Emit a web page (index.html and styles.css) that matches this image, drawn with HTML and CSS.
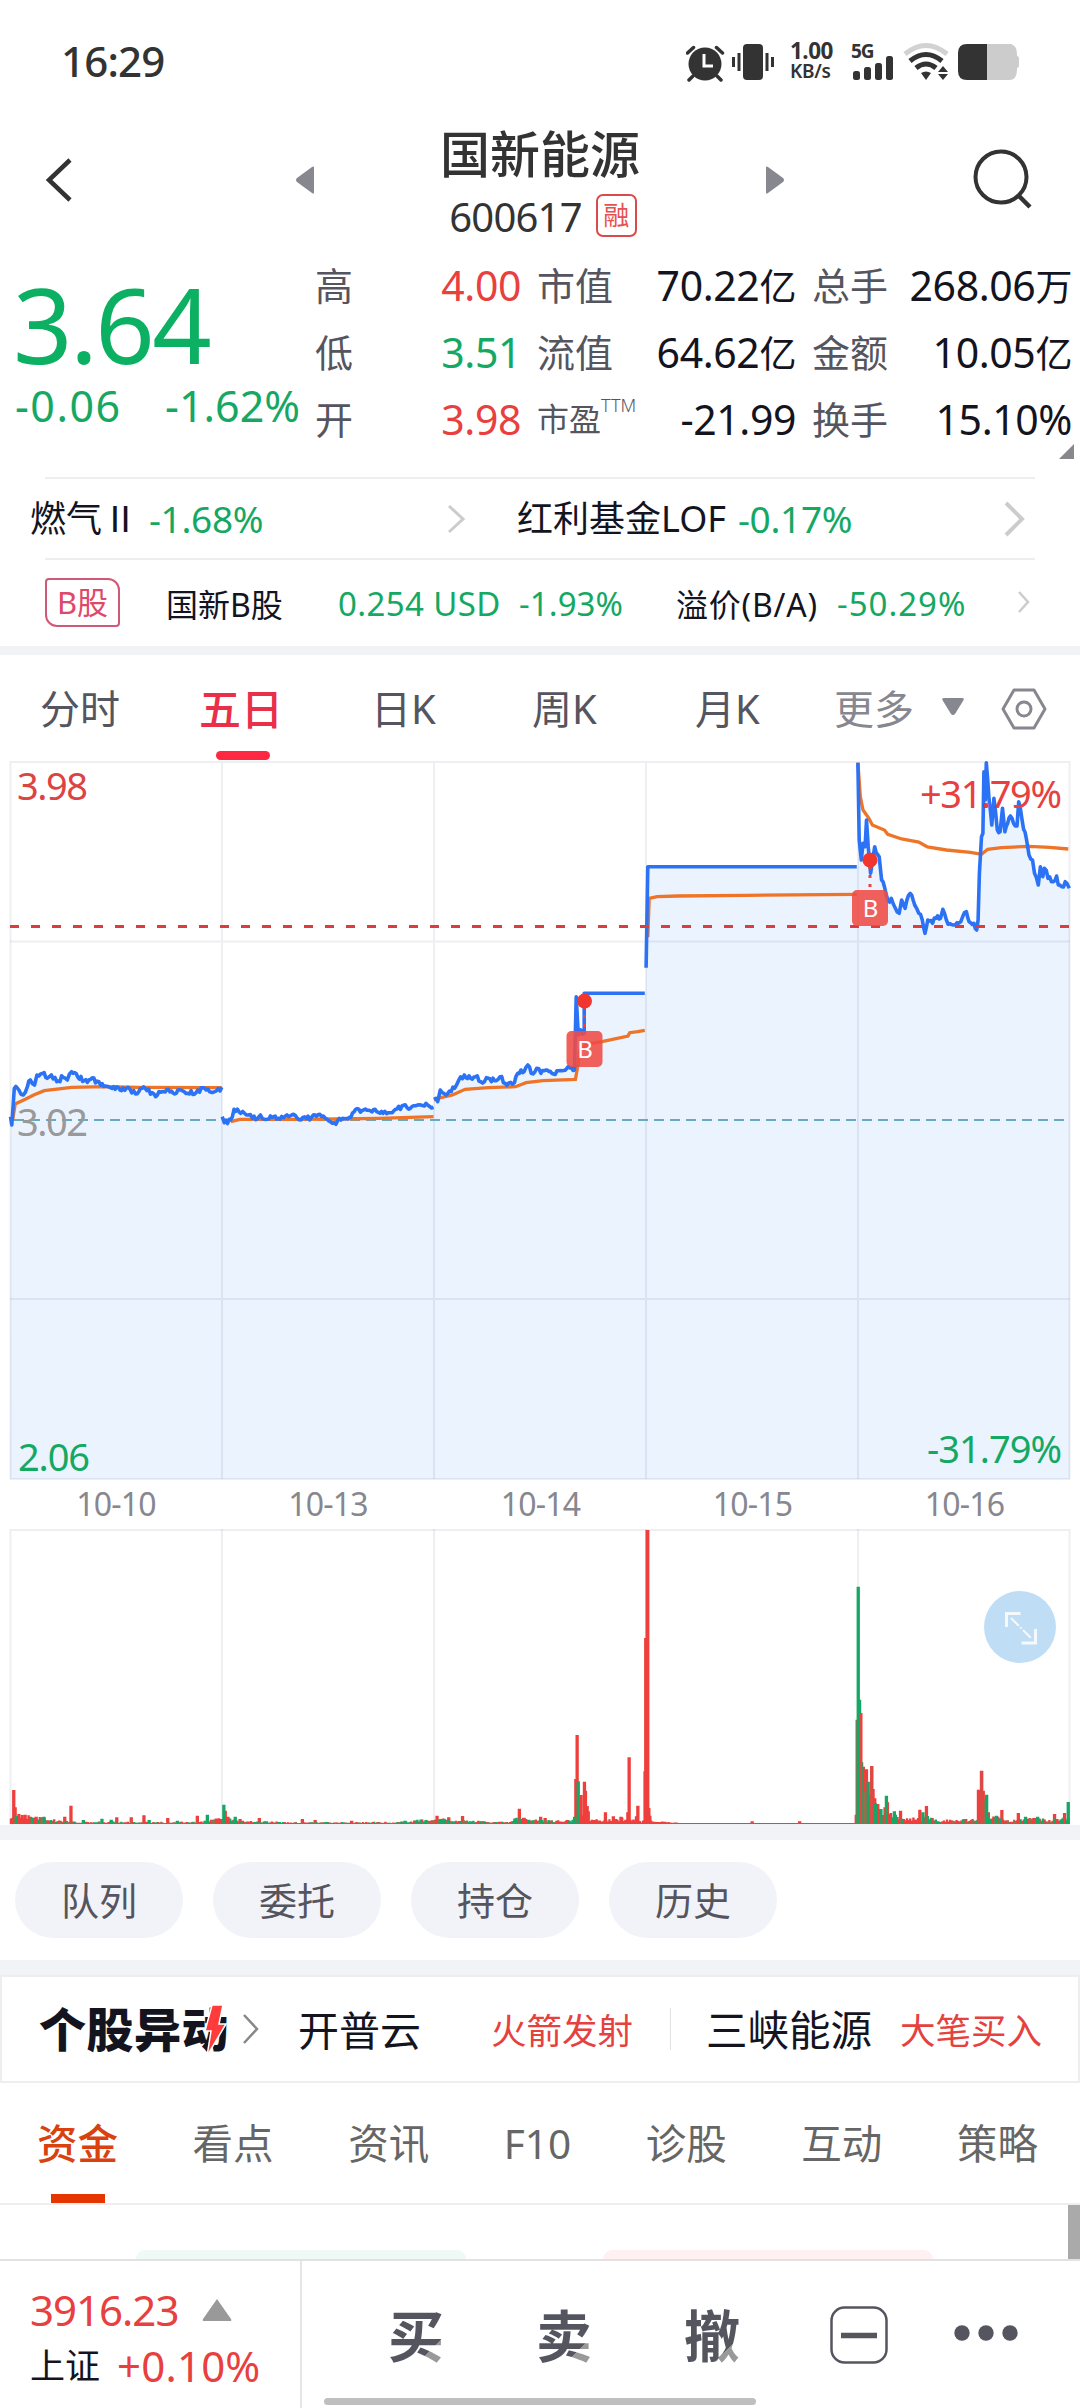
FILE: index.html
```html
<!DOCTYPE html>
<html lang="zh-CN">
<head>
<meta charset="utf-8">
<title>国新能源 600617</title>
<link rel="stylesheet" href="styles.css">
</head>
<body>
<div class="app">
  <div class="status">
    <span class="clock">16:29</span>
    <svg class="sys" width="116" height="40" viewBox="0 0 116 40">
      <g fill="#333" stroke="#333">
        <circle cx="19" cy="22" r="16.5" stroke="none"/>
        <path d="M1.500 11l6-5.500M36.500 11l-6-5.500M7 34l-4 4M31 34l4 4" stroke-width="3.500" stroke-linecap="round"/>
        <path d="M18 12v12h9" fill="none" stroke="#fff" stroke-width="3"/>
        <rect x="57" y="2" width="20" height="36" rx="4" stroke="none"/>
        <path d="M53 11v18M81 11v18" stroke-width="3"/><path d="M47.500 15v10M86.500 15v10" stroke-width="3"/>
      </g>
    </svg>
    <span class="net"><b>1.00</b><b class="kb">KB/s</b></span>
    <svg class="sys2" width="190" height="40" viewBox="0 0 190 40">
      <g fill="#333">
        <text x="0" y="15.500" class="fiveg">5G</text>
        <rect x="2" y="29" width="7" height="9" rx="2.500"/><rect x="13" y="25" width="7" height="13" rx="2.500"/><rect x="24" y="21" width="7" height="17" rx="2.500"/><rect x="35" y="14" width="7" height="24" rx="2.500"/>
        <path d="M54 12q21-17 42 0" fill="none" stroke="#d2d2d2" stroke-width="5"/>
        <path d="M59 19q16-13 32 0M65 26q10-8 20 0" fill="none" stroke="#333" stroke-width="5"/>
        <path d="M70 31q5-3 10 0l-5 7zM87 30l5-6 5 6zM87 32h10l-5 6z"/>
        <path d="M158 2h2q6 2 6 10v2q2 0 2 3v6q0 3-2 3v2q0 10-8 10h-24V2z" fill="#ccc"/>
        <path d="M136 2v36h-20q-9 0-9-9V11q0-9 9-9z"/>
      </g>
    </svg>
  </div>

  <header class="head">
    <svg class="back" width="30" height="48" viewBox="0 0 30 48"><path d="M26 4L5 24l21 20" fill="none" stroke="#333" stroke-width="4.500"/></svg>
    <svg class="prev" width="20" height="30" viewBox="0 0 20 30"><path d="M19 2v26q0 1-2 0L2 17q-2-2 0-4L17 2q2-1 2 0z" fill="#87878f"/></svg>
    <div class="title"><h1>国新能源</h1><div class="code"><span>600617</span><i>融</i></div></div>
    <svg class="next" width="20" height="30" viewBox="0 0 20 30"><path d="M1 2v26q0 1 2 0l15-11q2-2 0-4L3 2Q1 1 1 2z" fill="#87878f"/></svg>
    <svg class="search" width="62" height="62" viewBox="0 0 62 62"><circle cx="29" cy="29" r="25.500" fill="none" stroke="#333" stroke-width="4"/><path d="M46 47l12 12" stroke="#333" stroke-width="4.500"/></svg>
  </header>

  <section class="quote">
    <div class="last"><div class="price">3.64</div><div class="chg"><span class="abs">-0.06</span><span>-1.62%</span></div></div>
    <dl class="stats">
      <dt>高</dt><dd class="up">4.00</dd><dt>市值</dt><dd>70.22<em>亿</em></dd><dt>总手</dt><dd>268.06<em>万</em></dd>
      <dt>低</dt><dd class="down">3.51</dd><dt>流值</dt><dd>64.62<em>亿</em></dd><dt>金额</dt><dd>10.05<em>亿</em></dd>
      <dt>开</dt><dd class="up">3.98</dd><dt class="pe">市盈<sup>TTM</sup></dt><dd>-21.99</dd><dt>换手</dt><dd>15.10%</dd>
    </dl>
    <i class="corner"></i>
  </section>

  <section class="related">
    <span class="r1">燃气 Ⅱ</span><span class="down">-1.68%</span>
    <svg width="22" height="34" viewBox="0 0 22 34"><path d="M3 4l14 13L3 30" fill="none" stroke="#ccc" stroke-width="3"/></svg>
    <span class="r2">红利基金LOF</span><span class="down">-0.17%</span>
    <svg class="far" width="24" height="38" viewBox="0 0 24 38"><path d="M3 3l16 16L3 35" fill="none" stroke="#ccc" stroke-width="4"/></svg>
  </section>
  <section class="bshare">
    <i>B股</i><span class="b1">国新B股</span><span class="b2 down">0.254 USD</span><span class="b3 down">-1.93%</span><span class="b4">溢价(B/A)</span><span class="b5 down">-50.29%</span>
    <svg width="16" height="26" viewBox="0 0 16 26"><path d="M3 3l9 10-9 10" fill="none" stroke="#ccc" stroke-width="2.500"/></svg>
  </section>
  <div class="band thin"></div>

  <nav class="periods">
    <span>分时</span><span class="on">五日</span><span>日K</span><span>周K</span><span>月K</span><span class="more">更多</span>
    <svg class="tri" width="24" height="20" viewBox="0 0 24 20"><path d="M3 1h18q3 0 1 3l-8 13q-2 2-4 0L2 4Q0 1 3 1z" fill="#87878f"/></svg>
    <svg class="hex" width="48" height="44" viewBox="0 0 48 44"><path d="M14 3h20l11 19-11 19H14L3 22z" fill="none" stroke="#87878f" stroke-width="3" stroke-linejoin="round"/><circle cx="24" cy="22" r="7" fill="none" stroke="#87878f" stroke-width="3"/></svg>
  </nav>

  <svg class="chart" id="chart" width="1080" height="1065" viewBox="0 760 1080 1065">
    <g id="areas" fill="#ebf3ff"></g>
    <g fill="none" stroke="#1c2a4a" stroke-opacity=".075" stroke-width="2">
      <rect x="10.500" y="762" width="1059" height="717"/>
      <path d="M222 763v716M434 763v716M646 763v716M858 763v716M10 941.500h1060M10 1299h1060"/>
      <rect x="10.500" y="1530" width="1059" height="294"/>
      <path d="M222 1529v295M434 1529v295M646 1529v295M858 1529v295"/>
    </g>
    <path d="M14 1120h1056" stroke="#67a9be" stroke-width="2" stroke-dasharray="10 6"/>
    <g class="axis"><text x="17" y="1136" textLength="71" fill="#999">3.02</text></g>
    <g id="averages" fill="none" stroke="#ee7427" stroke-width="3.300"></g>
    <g id="prices" fill="none" stroke="#2b72f5" stroke-width="3.600" stroke-linejoin="round"></g>
    <path d="M10 926.500h1060" stroke="#dc3c3c" stroke-width="3.200" stroke-dasharray="9 12"/>
    <path d="M584.500 1006v25M870 866v24" stroke="#e8453f" stroke-width="3" stroke-dasharray="3 6"/>
    <g fill="#f0362f"><circle cx="584.500" cy="1001" r="7.500"/><circle cx="870" cy="860" r="7.500"/></g>
    <g fill="#ef4b46" fill-opacity=".88"><rect x="566.500" y="1031" width="36" height="36" rx="5"/><rect x="852" y="890" width="36" height="36" rx="5"/></g>
    <g class="mark"><text x="585" y="1058">B</text><text x="870.500" y="917">B</text></g>
    <g class="axis">
      <text x="17" y="800" textLength="71" fill="#dc4443">3.98</text>
      <text x="920" y="808" textLength="142" fill="#e8403f">+31.79%</text>
      <text x="18" y="1471" textLength="72" fill="#14a863">2.06</text>
      <text x="927" y="1463" textLength="135" fill="#14a863">-31.79%</text>
    </g>
    <g class="dates"><text x="116" y="1516">10-10</text><text x="328" y="1516">10-13</text><text x="540.500" y="1516">10-14</text><text x="752.500" y="1516">10-15</text><text x="964.500" y="1516">10-16</text></g>
    <g id="volumes"></g>
    <circle cx="1020" cy="1627" r="36" fill="#c0ddf6"/>
    <path d="M1006.500 1627v-13.500h14M1035.500 1629v14h-14" fill="none" stroke="#f4f9fe" stroke-width="3"/>
    <path d="M1011 1618l20 20" stroke="#f4f9fe" stroke-width="2" stroke-dasharray="11 2 2 2"/>
  </svg>
  <div class="band"></div>

  <div class="chips"><span>队列</span><span>委托</span><span>持仓</span><span>历史</span></div>
  <div class="band"></div>

  <section class="moves">
    <div class="logo">个股异动<svg width="24" height="54" viewBox="0 0 24 54"><path d="M8 2h11l-4 19h7L3 53l4-25H1z" fill="#ff3b3b" stroke="#fff" stroke-width="1.500"/></svg></div>
    <svg width="18" height="34" viewBox="0 0 18 34"><path d="M2 3l13 14L2 31" fill="none" stroke="#888" stroke-width="2.500"/></svg>
    <span class="m1">开普云</span><span class="m2">火箭发射</span><i></i><span class="m3">三峡能源</span><span class="m4">大笔买入</span>
  </section>

  <nav class="tabs"><span class="on">资金</span><span>看点</span><span>资讯</span><span>F10</span><span>诊股</span><span>互动</span><span>策略</span></nav>
  <div class="peek"><i class="g"></i><i class="p"></i><i class="bar"></i></div>

  <footer class="foot">
    <div class="index">
      <div class="i1"><span>3916.23</span><svg width="30" height="22" viewBox="0 0 30 22"><path d="M15 0l14 20q1 2-1 2H2q-2 0-1-2z" fill="#999"/></svg></div>
      <div class="i2"><span>上证</span><b>+0.10%</b></div>
    </div>
    <div class="acts">
      <span>买</span><span>卖</span><span class="c">撤</span>
      <svg width="60" height="60" viewBox="0 0 60 60"><rect x="2.500" y="2.500" width="55" height="55" rx="13" fill="none" stroke="#555560" stroke-width="2.500"/><path d="M12 30.500h36" stroke="#555560" stroke-width="5.500"/></svg>
      <svg class="dots" width="66" height="18" viewBox="0 0 66 18"><g fill="#555560"><circle cx="9" cy="9" r="7.700"/><circle cx="33" cy="9" r="7.700"/><circle cx="57" cy="9" r="7.700"/></g></svg>
      <i class="home"></i>
    </div>
  </footer>
</div>
<script src="chart.js"></script>
</body>
</html>
```
FILE: styles.css
```css
* { box-sizing: border-box; margin: 0; padding: 0; }
body { width: 1080px; background: #fff; color: #14141f; font-family: "Noto Sans", "Noto Sans CJK SC", sans-serif; font-size: 40px; white-space: nowrap; }
i, em { font-style: normal; }
svg { display: block; flex: none; }
span { flex: none; }
.app { width: 1080px; height: 2408px; display: flex; flex-direction: column; overflow: hidden; }
.app > * { flex: none; }
.up { color: #e8403f; }
.down { color: #14a863; }

.status { height: 110px; padding: 42px 0 0 61px; display: flex; align-items: flex-start; color: #333; }
.clock { width: 625px; font-size: 42px; line-height: 38px; font-weight: 500; letter-spacing: -.8px; }
.net { width: 61px; margin-left: -12px; display: flex; flex-direction: column; font-size: 22.500px; line-height: 18px; letter-spacing: -.5px; }
.net b { font-weight: 700; }
.net .kb { font-size: 19px; font-weight: 600; line-height: 22px; letter-spacing: -.3px; }
.sys2 { overflow: visible; }
.fiveg { font-size: 19px; font-weight: 700; letter-spacing: -1px; }

.head { height: 140px; padding-left: 44px; display: flex; align-items: flex-start; }
.back { margin-top: 46px; }
.prev { margin: 55px 0 0 221px; }
.title { width: 450px; display: flex; flex-direction: column; align-items: center; padding-top: 17px; }
.title h1 { font-size: 50px; line-height: 54px; font-weight: 500; color: #333; }
.code { display: flex; align-items: center; gap: 14px; height: 44px; margin-top: 12px; font-size: 40px; letter-spacing: -.8px; color: #333; padding-left: 6px; }
.code span { line-height: 44px; padding-top: 3px; }
.code i { width: 41px; height: 43px; border: 2px solid #d94a4a; border-radius: 7px; color: #e8504f; font-size: 26px; line-height: 38px; text-align: center; letter-spacing: 0; }
.next { margin: 55px 0 0 0; }
.search { margin: 38px 0 0 187px; }

.quote { height: 227px; position: relative; display: flex; }
.last { width: 315px; padding-left: 13px; color: #0cb062; }
.price { font-size: 104px; line-height: 96px; height: 130px; padding-top: 26px; letter-spacing: -2.500px; }
.chg { display: flex; justify-content: space-between; font-size: 43px; line-height: 50px; height: 50px; padding: 1px 15px 0 2px; color: #14a863; }
.abs { letter-spacing: 1.500px; }
.stats { width: 760px; display: grid; grid-template-columns: 64px 142px 90px 185px 107px 169px; grid-template-rows: 67px 67px 67px; padding-top: 2px; }
.stats dt { font-size: 38px; line-height: 66px; color: #555560; }
.stats dt:nth-of-type(3n+2), .stats dt:nth-of-type(3n) { padding-left: 16px; }
.stats dd { text-align: right; font-size: 41px; line-height: 66px; letter-spacing: -.4px; }
.stats em { font-size: 37px; }
.stats .pe { font-size: 32px; }
.pe sup { font-size: 18px; line-height: 0; vertical-align: 19px; font-weight: 300; }
.corner { position: absolute; right: 6px; bottom: 18px; width: 15px; height: 15px; background: #88888c; clip-path: polygon(100% 0, 100% 100%, 0 100%); }

.related { height: 83px; margin: 0 45px; border-top: 2px solid #eee; border-bottom: 2px solid #eee; display: flex; align-items: center; font-size: 37px; line-height: 76px; }
.related .down { letter-spacing: -.3px; width: 297px; }
.related .r1 { margin-left: -15px; width: 119px; font-size: 36px; word-spacing: -9px; }
.related .r2 { margin-left: 49px; font-size: 36px; width: 221px; }
.related .r2 + .down { width: 265px; }
.bshare { height: 86px; padding: 0 0 2px 45px; display: flex; align-items: center; font-size: 33px; }
.bshare span { padding-top: 2px; }
.bshare i { width: 75px; height: 49px; border: 2px solid #d05878; border-radius: 4px 12px 4px 12px; color: #e0486a; font-size: 31px; line-height: 44px; text-align: center; }
.b1 { width: 172px; margin-left: 46px; font-size: 32px; }
.b2 { width: 181px; letter-spacing: .4px; }
.b3 { width: 157px; letter-spacing: .1px; }
.b4 { width: 161px; font-size: 32px; letter-spacing: .8px; }
.b5 { width: 179px; letter-spacing: 1px; }
.band { height: 15px; background: #f2f3f7; }
.band.thin { height: 9px; }

.periods { height: 105px; padding: 8px 0 0 40px; display: flex; align-items: flex-start; color: #555560; font-size: 40px; line-height: 92px; }
.periods span:nth-child(1) { width: 159px; }
.periods span:nth-child(2) { width: 172px; }
.periods span:nth-child(3) { width: 161px; }
.periods span:nth-child(4) { width: 163px; }
.periods span:nth-child(5) { width: 139px; }
.periods .more { width: 107px; color: #87878f; }
.periods .on { position: relative; color: #ea2f49; font-weight: 500; font-size: 42px; }
.periods .on::after { content: ""; position: absolute; left: 17px; bottom: -5px; width: 54px; height: 9px; border-radius: 5px; background: #ff2842; }
.tri { margin-top: 34px; }
.hex { margin: 24px 0 0 35px; }

.axis { font-size: 38px; }
.dates { font-size: 32px; fill: #87878f; text-anchor: middle; letter-spacing: -.8px; }
.mark { font-size: 24px; fill: #fff; text-anchor: middle; }

.chips { height: 120px; padding: 22px 15px; display: flex; gap: 30px; }
.chips span { width: 168px; height: 76px; border-radius: 38px; background: #f2f3f8; color: #555560; text-align: center; font-size: 38px; line-height: 76px; }

.moves { height: 108px; border: 2px solid #eee; display: flex; align-items: center; padding-left: 37px; line-height: 60px; }
.moves > span { padding-top: 1px; }
.logo { position: relative; width: 203px; font-size: 47px; font-weight: 900; line-height: 60px; letter-spacing: .5px; }
.logo svg { position: absolute; left: 165px; top: 4px; }
.m1 { margin-left: 38px; width: 193px; font-size: 41px; }
.m2 { width: 179px; font-size: 35.500px; color: #e5413e; }
.moves i { width: 1px; height: 42px; background: #e2e2e6; }
.m3 { margin-left: 35px; width: 194px; font-size: 41.500px; }
.m4 { font-size: 35.500px; color: #e5413e; }

.tabs { height: 122px; border-bottom: 2px solid #eee; padding: 0 42px 0 37px; display: flex; justify-content: space-between; color: #666; font-size: 40.500px; line-height: 122px; }
.tabs .on { position: relative; color: #d9420f; font-weight: 500; }
.tabs .on::after { content: ""; position: absolute; left: 14px; bottom: 0; width: 54px; height: 9px; background: #e53600; }
.peek { height: 54px; display: flex; align-items: flex-end; padding-left: 136px; }
.peek i { width: 330px; height: 9px; border-radius: 14px 14px 0 0; }
.peek .g { background: #effaf6; }
.peek .p { background: #fff0f2; margin-left: 137px; }
.peek .bar { width: 12px; height: 54px; border-radius: 0; background: #aaa; margin-left: auto; }

.foot { height: 149px; border-top: 2px solid #e2e2e4; display: flex; }
.index { width: 302px; border-right: 2px solid #e6e6e8; padding: 21px 0 0 30px; }
.i1, .i2 { display: flex; align-items: center; height: 55px; line-height: 55px; color: #e8403f; }
.i1 { font-size: 42px; letter-spacing: -1px; }
.i1 svg { margin: 0 0 0 24px; }
.i2 { margin-top: 1px; }
.i2 span { width: 87px; font-size: 35px; color: #14141f; }
.i2 b { font-size: 42px; font-weight: 400; letter-spacing: .2px; }
.acts { position: relative; flex: 1; display: flex; align-items: center; padding: 0 0 0 86px; }
.acts span { width: 148px; font-size: 56px; font-weight: 700; line-height: 146px; color: transparent; background: linear-gradient(135deg, #555560 62px, #999 62px) no-repeat 0 50% / 60px 60px; background-clip: text; -webkit-background-clip: text; }
.acts .c { width: 145px; }
.dots { margin-left: 64px; margin-top: -4px; }
.home { position: absolute; left: 22px; bottom: 3px; width: 432px; height: 7px; border-radius: 4px; background: #bfbfbf; }
```
FILE: chart.js
```js
// Intraday key points per session: x in px, y in px below 740 times three.
const A = 2.3758, B = 2.9037;
const left = s => parse(s, x => x / A);
const right = s => parse(s, x => 540 + x / B);
function parse(s, fx) {
  return s.split(' ').map(p => { const [x, y] = p.split(',').map(Number); return [fx(x), 740 + y / 3]; });
}
let seed = 17;
const rnd = () => (seed = (seed * 16807) % 2147483647) / 2147483647;

const prices = [
  [left('25,1130 28,1155 34,1045 45,1050 55,1065 65,1040 72,1020 82,1035 88,1005 105,998 112,1015 122,1005 135,1025 150,1012 160,1020 170,995 185,1012 200,1022 215,1018 235,1025 250,1038 270,1040 285,1050 300,1045 322,1062 345,1045 370,1070 385,1055 400,1048 415,1062 430,1050 450,1062 470,1050 490,1050 510,1055 527,1042'), 2.6],
  [left('528,1130 533,1148 548,1140 556,1108 572,1120 590,1125 600,1135 615,1130 635,1138 650,1130 665,1138 678,1128 693,1125 715,1140 740,1132 768,1128 790,1150 810,1140 830,1132 845,1108 860,1112 880,1112 895,1115 910,1120 932,1118 955,1098 975,1105 1000,1095 1012,1090 1030,1102'), 2.4],
  [left('1031,1078 1040,1085 1046,1050 1060,1065 1080,1045 1090,1020 1103,1005 1118,1015 1130,1010 1142,1025 1160,1015 1175,1022 1188,1010 1200,1030 1222,1028 1230,1000 1245,995 1254,975 1262,1000 1275,985 1285,1000 1300,990 1315,1002 1335,992 1350,980 1365,990 1369,770 1374,885 1380,870 1388,880 1388,760 1532,760'), 2.6],
  [right('308,683 313,380 920,380'), 0],
  [right('923,68 927,300 933,360 938,310 944,320 948,240 953,320 960,400 972,320 985,350 992,420 1000,440 1010,480 1020,475 1032,505 1043,520 1050,480 1060,505 1075,460 1088,495 1100,520 1110,540 1118,580 1126,540 1140,550 1150,535 1163,535 1170,508 1180,540 1200,555 1222,545 1238,515 1246,545 1260,550 1268,570 1272,540 1276,400 1282,290 1286,280 1289,95 1293,180 1296,68 1304,180 1312,255 1318,175 1328,270 1336,275 1343,205 1350,275 1358,250 1366,228 1375,250 1385,258 1390,185 1400,240 1413,300 1420,345 1430,360 1436,400 1447,435 1453,380 1460,410 1465,385 1475,415 1490,425 1500,408 1505,435 1515,440 1525,425 1530,430 1537,445'), 3]
];
const averages = [
  left('30,1140 36,1092 60,1078 80,1065 105,1052 170,1042 250,1040 330,1042 527,1043'),
  left('548,1145 570,1138 700,1138 800,1137 900,1135 1030,1130'),
  left('1031,1080 1050,1072 1075,1065 1105,1048 1160,1043 1225,1040 1250,1028 1290,1022 1367,1018 1371,990 1378,930 1395,912 1430,905 1492,888 1496,878 1515,875 1532,871'),
  right('313,592 317,475 340,470 400,468 600,466 920,463'),
  right('923,68 930,170 938,210 955,235 965,255 1000,270 1010,283 1050,297 1100,306 1125,321 1180,330 1250,337 1282,343 1300,328 1340,323 1420,319 1480,322 1534,327')
];

function ticks(points, amp) {
  const out = [points[0]];
  for (let i = 1; i < points.length; i++) {
    const [x0, y0] = points[i - 1], [x1, y1] = points[i];
    const flat = y0 === y1 && x1 - x0 > 25;
    const n = flat || !amp ? 1 : Math.max(1, Math.round((x1 - x0) / 1.7));
    for (let k = 1; k < n; k++) {
      out.push([x0 + (x1 - x0) * k / n, Math.max(763, y0 + (y1 - y0) * k / n + (rnd() - .5) * 2 * amp)]);
    }
    out.push([x1, y1]);
  }
  return out;
}
const d = pts => 'M' + pts.map(p => p[0].toFixed(1) + ' ' + p[1].toFixed(1)).join('L');
const path = (id, v) => {
  const el = document.createElementNS('http://www.w3.org/2000/svg', 'path');
  el.setAttribute('d', v);
  document.getElementById(id).appendChild(el);
  return el;
};
const edges = [10, 222, 434, 646, 858, 1070];
prices.forEach(([pts, amp], i) => {
  const t = ticks(pts, amp);
  path('prices', d(t));
  path('areas', d(t) + `L${edges[i + 1]} ${t[t.length - 1][1]}V1479H${edges[i]}Z`);
});
averages.forEach(a => path('averages', d(a)));

// Turnover bars, top edge measured like the prices; g marks a falling minute.
const vols = { r: '', g: '', m: '' };
function bar(x, h, c, w = 3.3) { vols[c] += `M${(x - w / 2).toFixed(1)} 1824v-${h.toFixed(1)}h${w}v${h.toFixed(1)}z`; }
const envelope = [[10, 5], [20, 8], [45, 6], [60, 3], [80, 2], [200, 2], [223, 6], [240, 3], [300, 1.5], [400, 2], [434, 5], [465, 4], [480, 2.5], [510, 2], [517, 6], [540, 4], [570, 3], [578, 11], [590, 4], [610, 4], [624, 6], [640, 3], [655, 3], [680, 1], [855, .7], [857, 20], [870, 22], [885, 14], [900, 6], [920, 5], [928, 9], [935, 4], [960, 4], [978, 5], [985, 14], [992, 8], [1010, 3], [1030, 6], [1050, 4], [1069, 8]];
for (let x = 11; x < 1070; x += 1.6) {
  const i = envelope.findIndex(e => e[0] > x);
  const p = envelope[Math.max(0, i - 1)], q = envelope[i < 0 ? envelope.length - 1 : i];
  const e = p[1] + (q[1] - p[1]) * Math.min(1, (x - p[0]) / ((q[0] - p[0]) || 1));
  const calm = x > 585 && x < 857;
  bar(x, Math.max(.9, e * (.5 + rnd() * .7)), calm ? 'r' : rnd() < .28 ? 'g' : rnd() < .25 ? 'm' : 'r', 2.4);
}
const peaks = (s, off) => s.split(' ').forEach(t => {
  const m = t.match(/(\d+),(\d+)([rgm])/);
  bar(off + m[1] / B, (970 - m[2]) / 3, m[3]);
});
peaks('40,868r 44,920r 55,940r 73,942r 88,948r 105,948r 128,948g 188,948r 206,915r 242,958g 296,954g 323,957g 339,950r 381,950r 418,944r 433,958g 487,952r 515,960g 573,945r 602,942g 650,912g 654,930r 662,948r 683,948g 697,955r 753,952r 878,955r 915,958r 1021,960r 1176,960g 1237,958g 1269,945r 1285,955g 1303,950r 1343,946r 1508,924r 1495,954r 1515,955r 1535,958g', 0);
peaks('2,948r 15,952r 49,960r 80,958r 104,835r 108,703r 111,842g 119,883r 129,843r 132,870r 137,916r 140,932r 190,935r 213,947r 235,948r 259,770r 284,915r 280,947r 255,935r 307,412r 305,812r 311,88r 313,88r 316,922r 319,945r 616,962r 754,962r 921,657m 924,258g 928,597g 931,637r 934,785g 939,798r 943,872m 948,806r 953,843g 958,880m 963,796r 967,865r 972,893r 974,908g 990,925g 1006,885g 1009,905r 1029,932g 1047,930r 1103,927r 1112,935g 1122,916r 1273,867r 1282,810r 1287,870r 1297,882g 1292,895m 1302,935r 1325,945g 1341,928r 1389,937r 1410,948g 1445,948g 1494,940r 1523,937r 1534,904g', 540);
path('volumes', vols.r).setAttribute('fill', '#ee3f3c');
path('volumes', vols.m).setAttribute('fill', '#95704c');
path('volumes', vols.g).setAttribute('fill', '#16a765');
// Keep the tall opening spikes in front of their neighbours.
vols.r = '';
bar(540 + 931 / B, 111, 'r'); bar(540 + 963 / B, 58, 'r'); bar(540 + 1282 / B, 53, 'r');
path('volumes', vols.r).setAttribute('fill', '#dd4a45');
```
